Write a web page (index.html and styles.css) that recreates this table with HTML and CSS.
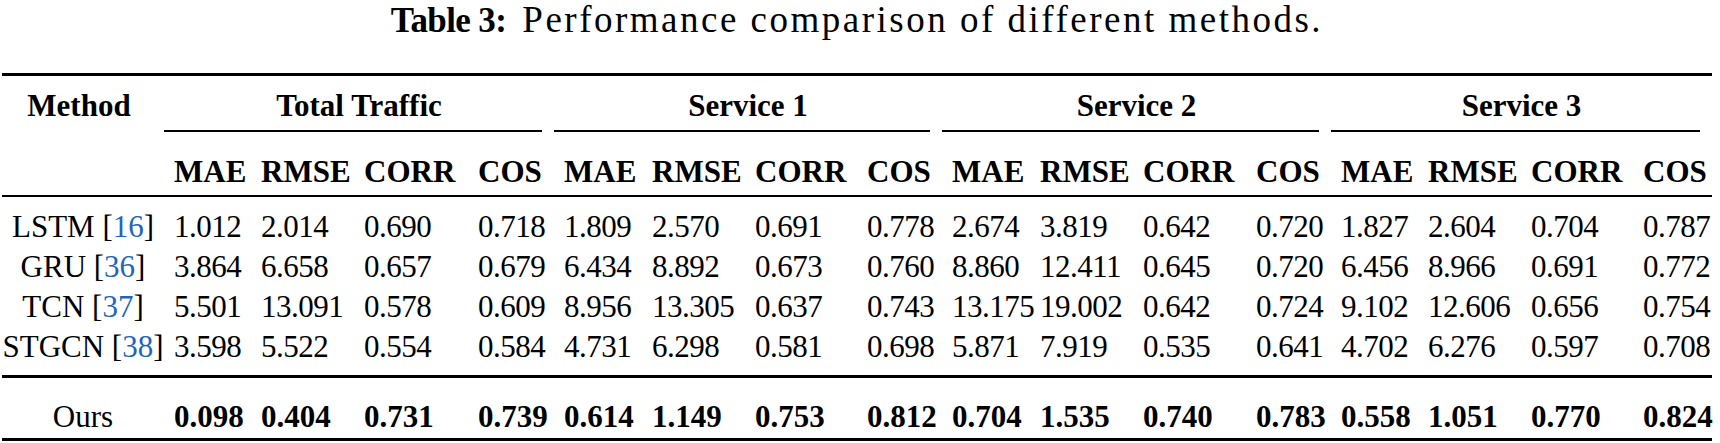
FILE: index.html
```html
<!DOCTYPE html>
<html lang="en">
<head>
<meta charset="utf-8">
<title>Table 3</title>
<link rel="stylesheet" href="styles.css">
</head>
<body>
<div class="figure">
  <div class="caption"><span class="cap-label">Table 3:</span><span class="cap-text">Performance comparison of different methods.</span></div>
  <div class="table">
    <div class="row head1">
      <div class="method mhead">Method</div>
      <div class="grp"><div class="glabel">Total Traffic</div><div class="cmid"></div></div>
      <div class="grp"><div class="glabel">Service 1</div><div class="cmid"></div></div>
      <div class="grp"><div class="glabel">Service 2</div><div class="cmid"></div></div>
      <div class="grp"><div class="glabel">Service 3</div><div class="cmid"></div></div>
    </div>
    <div class="row head2">
      <div class="method"></div>
      <div class="c">MAE</div><div class="c">RMSE</div><div class="c">CORR</div><div class="c">COS</div>
      <div class="c">MAE</div><div class="c">RMSE</div><div class="c">CORR</div><div class="c">COS</div>
      <div class="c">MAE</div><div class="c">RMSE</div><div class="c">CORR</div><div class="c">COS</div>
      <div class="c">MAE</div><div class="c">RMSE</div><div class="c">CORR</div><div class="c">COS</div>
    </div>
    <div class="row data first">
      <div class="method">LSTM [<span class="cite">16</span>]</div>
      <div class="c">1.012</div><div class="c">2.014</div><div class="c">0.690</div><div class="c">0.718</div>
      <div class="c">1.809</div><div class="c">2.570</div><div class="c">0.691</div><div class="c">0.778</div>
      <div class="c">2.674</div><div class="c">3.819</div><div class="c">0.642</div><div class="c">0.720</div>
      <div class="c">1.827</div><div class="c">2.604</div><div class="c">0.704</div><div class="c">0.787</div>
    </div>
    <div class="row data">
      <div class="method">GRU [<span class="cite">36</span>]</div>
      <div class="c">3.864</div><div class="c">6.658</div><div class="c">0.657</div><div class="c">0.679</div>
      <div class="c">6.434</div><div class="c">8.892</div><div class="c">0.673</div><div class="c">0.760</div>
      <div class="c">8.860</div><div class="c">12.411</div><div class="c">0.645</div><div class="c">0.720</div>
      <div class="c">6.456</div><div class="c">8.966</div><div class="c">0.691</div><div class="c">0.772</div>
    </div>
    <div class="row data">
      <div class="method">TCN [<span class="cite">37</span>]</div>
      <div class="c">5.501</div><div class="c">13.091</div><div class="c">0.578</div><div class="c">0.609</div>
      <div class="c">8.956</div><div class="c">13.305</div><div class="c">0.637</div><div class="c">0.743</div>
      <div class="c">13.175</div><div class="c">19.002</div><div class="c">0.642</div><div class="c">0.724</div>
      <div class="c">9.102</div><div class="c">12.606</div><div class="c">0.656</div><div class="c">0.754</div>
    </div>
    <div class="row data last">
      <div class="method">STGCN [<span class="cite">38</span>]</div>
      <div class="c">3.598</div><div class="c">5.522</div><div class="c">0.554</div><div class="c">0.584</div>
      <div class="c">4.731</div><div class="c">6.298</div><div class="c">0.581</div><div class="c">0.698</div>
      <div class="c">5.871</div><div class="c">7.919</div><div class="c">0.535</div><div class="c">0.641</div>
      <div class="c">4.702</div><div class="c">6.276</div><div class="c">0.597</div><div class="c">0.708</div>
    </div>
    <div class="row ours">
      <div class="method">Ours</div>
      <div class="c">0.098</div><div class="c">0.404</div><div class="c">0.731</div><div class="c">0.739</div>
      <div class="c">0.614</div><div class="c">1.149</div><div class="c">0.753</div><div class="c">0.812</div>
      <div class="c">0.704</div><div class="c">1.535</div><div class="c">0.740</div><div class="c">0.783</div>
      <div class="c">0.558</div><div class="c">1.051</div><div class="c">0.770</div><div class="c">0.824</div>
    </div>
  </div>
</div>
</body>
</html>
```

FILE: styles.css
```css
html, body {
  margin: 0;
  padding: 0;
  background: #ffffff;
}

body {
  font-family: "Liberation Serif", "Times New Roman", serif;
  color: #000000;
}

.figure {
  width: 1710px;
  margin-left: 2px;
}

.caption {
  height: 40px;
  line-height: 40px;
  text-align: center;
  white-space: nowrap;
  margin-bottom: 33px;
}

.cap-label {
  font-size: 35px;
  font-weight: bold;
  letter-spacing: -0.6px;
  margin-right: 16px;
}

.cap-text {
  font-size: 37px;
  letter-spacing: 2.5px;
}

.table {
  --cols: 162px 87px 103px 114px 86px 88px 103px 112px 85px 88px 103px 113px 85px 87px 103px 112px 79px;
  font-size: 31px;
  line-height: 40px;
}

.row {
  display: grid;
  grid-template-columns: var(--cols);
}

.c {
  padding-left: 10px;
  white-space: nowrap;
  text-align: left;
}

.data .c {
  letter-spacing: -0.5px;
}

.method {
  text-align: center;
  white-space: nowrap;
}

.mhead {
  padding-right: 8px;
}

.head1 {
  border-top: 3px solid #000;
  padding-top: 10px;
  font-weight: bold;
}

.grp {
  grid-column: span 4;
}

.glabel {
  text-align: center;
  white-space: nowrap;
}

.cmid {
  height: 2px;
  margin-top: 4px;
  margin-right: 12px;
  background: #000;
}

.head2 {
  padding-top: 20px;
  padding-bottom: 3px;
  border-bottom: 2px solid #000;
  font-weight: bold;
}

.data.first {
  padding-top: 10px;
}

.data.last {
  padding-bottom: 8px;
  border-bottom: 3px solid #000;
}

.ours {
  padding-top: 19px;
  padding-bottom: 1px;
  border-bottom: 3px solid #000;
}

.ours .c {
  font-weight: bold;
}

.cite {
  color: #1f66b8;
}
```
